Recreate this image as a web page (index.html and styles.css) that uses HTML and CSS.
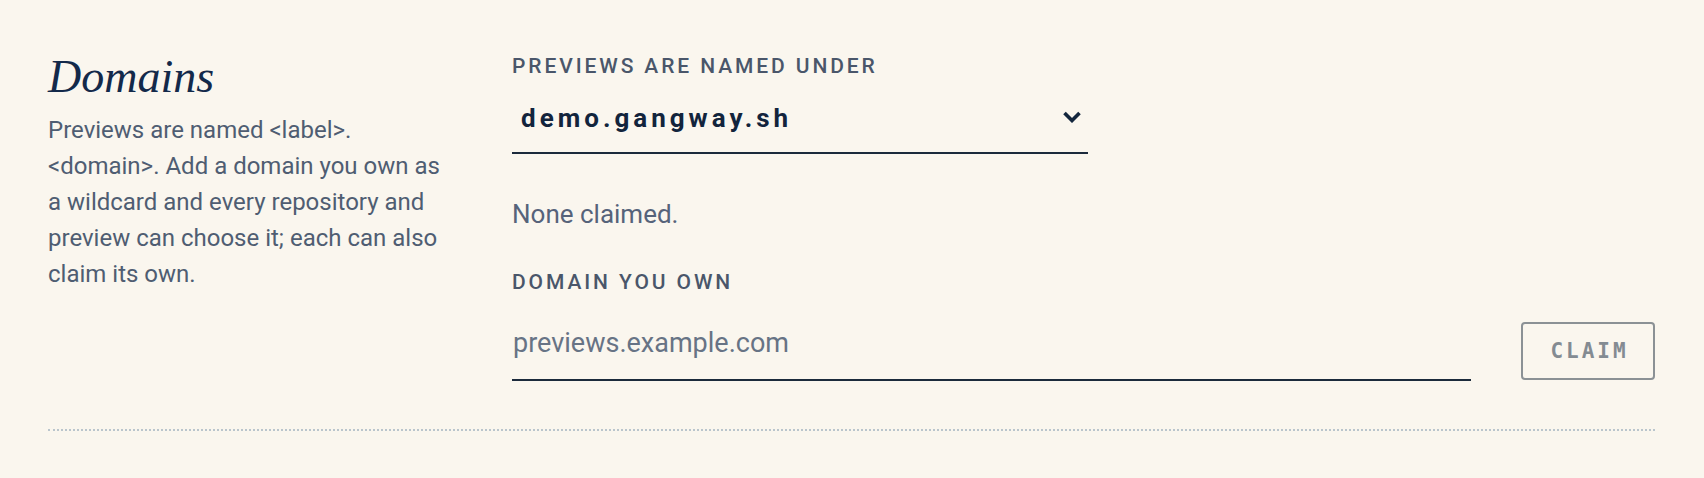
FILE: index.html
```html
<!DOCTYPE html>
<html lang="en">
<head>
<meta charset="utf-8">
<title>Domains</title>
<link rel="stylesheet" href="styles.css">
</head>
<body>
<main class="page">
  <section class="section">
    <div class="intro">
      <h2 class="title">Domains</h2>
      <p class="desc">Previews are named &lt;label&gt;.&lt;domain&gt;. Add a domain you own as a wildcard and every repository and preview can choose it; each can also claim its own.</p>
    </div>
    <div class="fields">
      <div class="label">Previews are named under</div>
      <div class="select">
        <span class="select-value">demo.gangway.sh</span>
        <svg class="chevron" width="20" height="12" viewBox="0 0 20 12" aria-hidden="true">
          <path d="M2.5 2 L10 9.5 L17.5 2" fill="none" stroke="#13263d" stroke-width="3.6" stroke-linejoin="miter"/>
        </svg>
      </div>
      <p class="none">None claimed.</p>
      <div class="label label-2">Domain you own</div>
      <div class="claim-row">
        <div class="input">previews.example.com</div>
        <button class="claim" type="button">Claim</button>
      </div>
    </div>
  </section>
  <div class="divider"></div>
</main>
</body>
</html>
```

FILE: styles.css
```css
html, body {
  margin: 0;
  padding: 0;
  background: #faf6ee;
}

body {
  font-family: Roboto, "Liberation Sans", Arial, sans-serif;
  color: #4d5b70;
}

.page {
  padding: 52px 49px 0 48px;
}

.section {
  display: grid;
  grid-template-columns: 396px 1fr;
  column-gap: 68px;
}

.title {
  margin: 0;
  font-family: "Liberation Serif", "Times New Roman", serif;
  font-style: italic;
  font-weight: 400;
  font-size: 46px;
  line-height: 50px;
  color: #13294a;
}

.desc {
  margin: 10px 0 0;
  font-size: 24px;
  line-height: 36px;
  color: #4f5d72;
}

.fields {
  padding-top: 2px;
  display: flex;
  flex-direction: column;
}

.label {
  font-size: 21px;
  line-height: 24px;
  font-weight: 500;
  letter-spacing: 2.9px;
  text-transform: uppercase;
  color: #4a566a;
}

.select {
  width: 576px;
  box-sizing: border-box;
  display: flex;
  align-items: center;
  justify-content: space-between;
  padding: 22px 6px 16px 9px;
  border-bottom: 2px solid #1b2a3b;
}

.select-value {
  font-size: 26px;
  line-height: 36px;
  font-weight: 700;
  letter-spacing: 4px;
  color: #12243c;
}

.chevron {
  display: block;
  margin-top: -3px;
}

.none {
  margin: 42px 0 0;
  font-size: 26px;
  line-height: 36px;
  color: #56637a;
}

.label-2 {
  margin-top: 38px;
}

.claim-row {
  margin-top: 28px;
  display: flex;
  align-items: flex-start;
  gap: 50px;
}

.input {
  flex: 1;
  padding: 3px 0 18px 1px;
  font-size: 27px;
  line-height: 36px;
  color: #677385;
  border-bottom: 2px solid #1b2a3b;
}

.claim {
  width: 134px;
  height: 58px;
  box-sizing: border-box;
  margin: 0;
  padding: 0 0 0 3px;
  background: transparent;
  border: 2px solid #8b9195;
  border-radius: 4px;
  font-family: "DejaVu Sans Mono", "Liberation Mono", monospace;
  font-weight: 700;
  font-size: 21px;
  letter-spacing: 3px;
  text-transform: uppercase;
  color: #848b92;
}

.divider {
  margin-top: 48px;
  border-top: 2px dotted #bac5cc;
}
```
